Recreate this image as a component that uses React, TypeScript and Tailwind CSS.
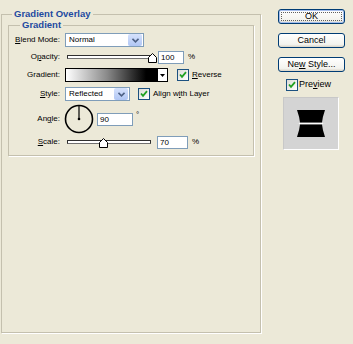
import React from "react";

const font = { fontFamily: '"Liberation Sans", Arial, sans-serif' };

const Check = () => (
  <div className="w-[12px] h-[12px] border border-[#1c5180] bg-[linear-gradient(135deg,#dcdcd7,#fff)] flex items-center justify-center">
    <svg width="8" height="8" viewBox="0 0 8 8">
      <path d="M1 3.5 L3 5.8 L7 1.2" stroke="#21a121" strokeWidth="1.8" fill="none" />
    </svg>
  </div>
);

const DropBtn = () => (
  <div className="w-[14px] h-[12px] mr-[1px] rounded-[2px] bg-[linear-gradient(#d6e2fc,#b0c6f4)] flex items-center justify-center">
    <svg width="7" height="5" viewBox="0 0 7 5">
      <path d="M0.5 0.8 L3.5 3.8 L6.5 0.8" stroke="#4d6185" strokeWidth="1.6" fill="none" />
    </svg>
  </div>
);

const Thumb = ({ left }: { left: number }) => (
  <svg
    className="absolute top-[3px]"
    style={{ left }}
    width="9"
    height="10"
    viewBox="0 0 9 10"
  >
    <path d="M4.5 0.5 L8.5 4.5 L8.5 9.5 L0.5 9.5 L0.5 4.5 Z" fill="#fff" stroke="#000" />
  </svg>
);

const Slider = ({ width, thumb }: { width: number; thumb: number }) => (
  <div className="relative h-[14px] ml-[2px]" style={{ width }}>
    <div className="mt-[5px] h-[4px] border border-[#303030] border-b-[#707070] bg-white" />
    <Thumb left={thumb} />
  </div>
);

const Field = ({ w, value }: { w: number; value: string }) => (
  <div
    className="h-[13px] border border-[#7f9db9] bg-white pl-[2px] text-[8px] leading-[11px]"
    style={{ width: w }}
  >
    {value}
  </div>
);

const Label = ({ children }: { children: React.ReactNode }) => (
  <div className="w-[52px] pr-[1px] mr-[4px] text-right text-[8px] leading-[14px] text-black">
    {children}
  </div>
);

const Btn = ({ children, primary }: { children: React.ReactNode; primary?: boolean }) => (
  <div
    className={
      "w-[67px] h-[15px] rounded-[3px] border border-[#003c74] bg-[linear-gradient(#ffffff,#f3f3ee_80%,#d8d3c6)] flex items-center justify-center text-[9px] leading-[13px] text-black " +
      (primary ? "shadow-[inset_0_0_0_1px_#a4bdec]" : "")
    }
  >
    {primary ? (
      <div className="w-[61px] h-[9px] border border-dotted border-[#606060] flex items-center justify-center">
        <span>{children}</span>
      </div>
    ) : (
      <span>{children}</span>
    )}
  </div>
);

export default function App() {
  return (
    <div className="w-[353px] h-[344px] bg-[#ece9d8] flex pt-[9px] pl-[1px]" style={font}>
      <fieldset className="w-[260px] h-[324px] border border-[#c4c0ae] shadow-[1px_1px_0_#fff] px-[6px]">
        <legend className="ml-[4px] px-[2px] text-[9.5px] leading-[10px] font-bold text-[#1d4aa0]">
          Gradient Overlay
        </legend>
        <fieldset className="mt-[1px] w-[246px] border border-[#c4c0ae] shadow-[1px_1px_0_#fff] pb-[6px]">
          <legend className="ml-[11px] px-[2px] text-[9.5px] leading-[10px] font-bold text-[#1d4aa0]">
            Gradient
          </legend>

          <div className="flex items-center h-[14px] mt-[3px]">
            <Label>
              <span className="underline">B</span>lend Mode:
            </Label>
            <div className="w-[79px] h-[14px] border border-[#7f9db9] bg-white flex items-center justify-between">
              <span className="pl-[3px] text-[8px]">Normal</span>
              <DropBtn />
            </div>
          </div>

          <div className="flex items-center h-[14px] mt-[3px]">
            <Label>
              O<span className="underline">p</span>acity:
            </Label>
            <Slider width={85} thumb={81} />
            <div className="ml-[6px]">
              <Field w={26} value="100" />
            </div>
            <span className="ml-[4px] text-[8px]">%</span>
          </div>

          <div className="flex items-center h-[14px] mt-[4px]">
            <Label>Gradient:</Label>
            <div className="w-[93px] h-[14px] border border-black bg-[linear-gradient(to_right,#ffffff,#8a8a8a_45%,#000000_88%)]" />
            <div className="w-[10px] h-[14px] border border-l-0 border-black bg-white flex items-center justify-center">
              <svg width="5" height="3" viewBox="0 0 5 3">
                <path d="M0 0 H5 L2.5 3 Z" fill="#000" />
              </svg>
            </div>
            <div className="ml-[9px]">
              <Check />
            </div>
            <span className="ml-[3px] text-[8px]">
              <span className="underline">R</span>everse
            </span>
          </div>

          <div className="flex items-center h-[14px] mt-[5px]">
            <Label>
              <span className="underline">S</span>tyle:
            </Label>
            <div className="w-[65px] h-[14px] border border-[#7f9db9] bg-white flex items-center justify-between">
              <span className="pl-[3px] text-[8px]">Reflected</span>
              <DropBtn />
            </div>
            <div className="ml-[8px]">
              <Check />
            </div>
            <span className="ml-[3px] text-[8px]">
              Align w<span className="underline">i</span>th Layer
            </span>
          </div>

          <div className="flex items-center h-[28px] mt-[4px]">
            <Label>
              An<span className="underline">g</span>le:
            </Label>
            <svg width="30" height="30" viewBox="0 0 30 30" className="-ml-[1px]">
              <circle cx="15" cy="15" r="13.5" fill="none" stroke="#000" strokeWidth="1.6" />
              <line x1="15" y1="15" x2="15" y2="2" stroke="#000" strokeWidth="1.2" />
              <circle cx="15" cy="15" r="1.3" fill="#000" />
            </svg>
            <div className="ml-[3px]">
              <Field w={36} value="90" />
            </div>
            <span className="ml-[3px] self-start mt-[4px] text-[8px]">°</span>
          </div>

          <div className="flex items-center h-[14px] mt-[2px]">
            <Label>
              <span className="underline">S</span>cale:
            </Label>
            <Slider width={84} thumb={32} />
            <div className="ml-[6px]">
              <Field w={31} value="70" />
            </div>
            <span className="ml-[4px] text-[8px]">%</span>
          </div>
        </fieldset>
      </fieldset>

      <div className="pl-[17px] flex flex-col">
        <Btn primary>OK</Btn>
        <div className="mt-[9px]">
          <Btn>Cancel</Btn>
        </div>
        <div className="mt-[9px]">
          <Btn>
            Ne<span className="underline">w</span> Style...
          </Btn>
        </div>
        <div className="mt-[7px] ml-[8px] flex items-center h-[12px]">
          <Check />
          <span className="ml-[1px] text-[9px]">
            Pre<span className="underline">v</span>iew
          </span>
        </div>
        <div className="mt-[6px] ml-[5px] w-[56px] h-[53px] bg-[#d4d4d4] border border-[#c8c8c8] border-r-white border-b-white flex items-center justify-center">
          <svg width="30" height="29" viewBox="0 0 30 29">
            <defs>
              <radialGradient id="glow" cx="50%" cy="50%" r="50%">
                <stop offset="0%" stopColor="#ffffff" />
                <stop offset="100%" stopColor="#ffffff" stopOpacity="0" />
              </radialGradient>
            </defs>
            <path d="M1 1 H29 Q26.5 8 26 13.5 H4 Q3.5 8 1 1 Z" fill="#000" />
            <path d="M4 15.5 H26 Q26.5 21 29 28 H1 Q3.5 21 4 15.5 Z" fill="#000" />
            <rect x="0" y="13.5" width="30" height="2" fill="url(#glow)" />
            <rect x="3" y="14" width="24" height="1" fill="#fff" />
          </svg>
        </div>
      </div>
    </div>
  );
}
